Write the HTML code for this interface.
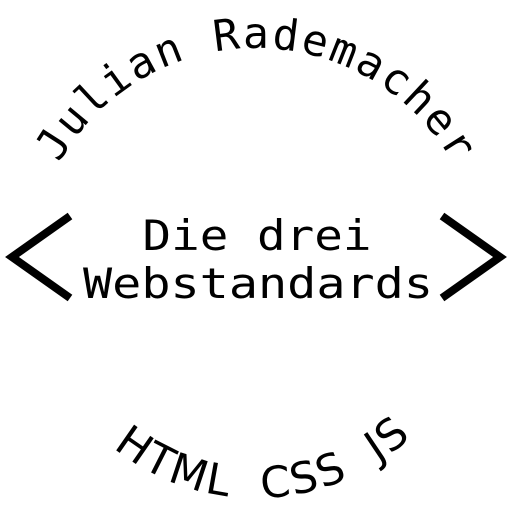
<!DOCTYPE html>
<html><head><meta charset="utf-8"><style>html,body{margin:0;padding:0;background:#fff;width:512px;height:512px;overflow:hidden}</style></head>
<body>
<svg width="512" height="512" viewBox="0 0 512 512" xmlns="http://www.w3.org/2000/svg">
<defs>
<path id="top" d="M 30 274 A 226 226 0 0 1 482 274"/>
<path id="bot" d="M 28 270 A 228 228 0 0 0 484 270"/>
</defs>
<text font-family="'DejaVu Sans Mono','Liberation Mono',monospace" font-size="43" fill="#000" text-anchor="middle" textLength="478" lengthAdjust="spacing"><textPath href="#top" startOffset="50%">Julian Rademacher</textPath></text>
<text font-family="'DejaVu Sans','Liberation Sans',sans-serif" font-size="43" fill="#000" text-anchor="middle" textLength="325" lengthAdjust="spacing"><textPath href="#bot" startOffset="366" xml:space="preserve">HTML  CSS  JS</textPath></text>
<polyline points="70,216 12,257 70,298" fill="none" stroke="#000" stroke-width="8" stroke-linejoin="miter"/>
<polyline points="442,216 500,257 442,298" fill="none" stroke="#000" stroke-width="8" stroke-linejoin="miter"/>
<text x="257" y="250" font-family="'DejaVu Sans Mono','Liberation Mono',monospace" font-size="42" text-anchor="middle" textLength="229" lengthAdjust="spacingAndGlyphs">Die drei</text>
<text x="258" y="298" font-family="'DejaVu Sans Mono','Liberation Mono',monospace" font-size="42" text-anchor="middle" textLength="350" lengthAdjust="spacingAndGlyphs">Webstandards</text>
</svg>
</body></html>
